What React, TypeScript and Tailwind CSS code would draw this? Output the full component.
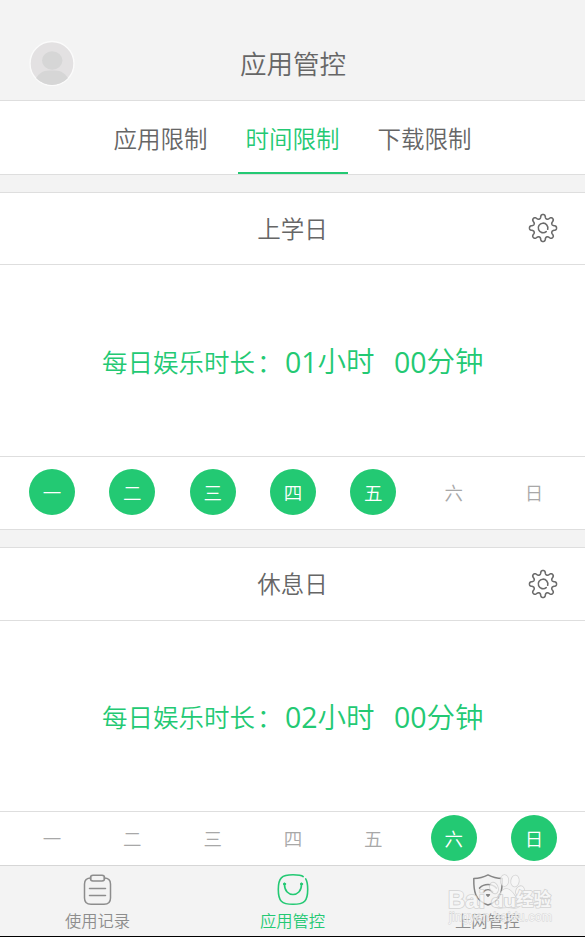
import React from 'react';

const GREEN = '#23c973';

const gearPath = (() => {
  const points: string[] = [];
  for (let i = 0; i < 240; i++) {
    const a = (i / 240) * Math.PI * 2;
    const r = 11.6 + (1.9 * Math.tanh(1.6 * Math.cos(8 * a))) / Math.tanh(1.6);
    points.push(`${(15 + r * Math.cos(a)).toFixed(2)} ${(15 + r * Math.sin(a)).toFixed(2)}`);
  }
  return `M${points.join('L')}Z`;
})();

function Gear() {
  return (
    <svg className="mb-px size-[30px]" viewBox="0 0 30 30" fill="none" stroke="#6b6b6b" strokeWidth="1.6" strokeLinejoin="round">
      <path d={gearPath} />
      <path d="M18.2 18.6A4.8 4.8 0 1 1 19.7 16.2" strokeLinecap="round" />
    </svg>
  );
}

function Avatar() {
  return (
    <svg className="ml-[29px] mt-10 size-[46px]" viewBox="0 0 46 46">
      <clipPath id="avatar">
        <circle cx="23" cy="23.5" r="21.5" />
      </clipPath>
      <circle cx="23" cy="23.5" r="22" fill="#e3e1e2" stroke="#fbfbfb" strokeWidth="1.4" />
      <g clipPath="url(#avatar)" fill="#d6d6d6">
        <ellipse cx="23.2" cy="20.5" rx="10.2" ry="9.3" />
        <path d="M5 42C9 33 14 30.5 20 30.5h6c6 0 11 2.500 15 11.500v6H5Z" />
      </g>
    </svg>
  );
}

function Day({ label, on }: { label: string; on: boolean }) {
  return (
    <div
      className={`flex size-[46px] shrink-0 items-center justify-center rounded-full text-[18.500px] leading-none ${
        on ? 'bg-[#23c973] text-white' : 'text-[#a8a8a8]'
      }`}
    >
      {label}
    </div>
  );
}

const days = ['一', '二', '三', '四', '五', '六', '日'];

function Duration({ value, unit }: { value: string; unit: string }) {
  return (
    <>
      <span className="pt-[3px] font-['Open_Sans',sans-serif] text-[28.500px] font-normal">{value}</span>
      <span className="text-[28.500px]">{unit}</span>
    </>
  );
}

function Section({ title, hours, active, last }: { title: string; hours: string; active: number[]; last?: boolean }) {
  return (
    <section className="shrink-0 bg-white">
      <div className={`grid ${last ? 'h-[74px]' : 'h-[73px]'} grid-cols-[1fr_auto_1fr] items-center border-y border-[#dedede]`}>
        <h2 className="col-start-2 text-[23.500px] leading-none text-[#666666]">{title}</h2>
        <div className="flex justify-end pr-[27px]">
          <Gear />
        </div>
      </div>
      <div className={`${last ? 'h-[190px]' : 'h-[191px]'} flex items-center whitespace-pre pl-[102px] leading-none text-[#23c973]`}>
        <span className="w-[183px] text-[25.500px]">
          每日娱乐时长<span className="ml-0.5">：</span>
        </span>
        <span className="flex w-[109px] items-center">
          <Duration value={hours} unit="小时" />
        </span>
        <span className="flex items-center">
          <Duration value="00" unit="分钟" />
        </span>
      </div>
      <div
        className={`flex justify-between border-t border-[#dedede] pl-[29px] pr-7 ${last ? 'h-[54px] pt-[3px]' : 'h-[74px] border-b pt-[12px]'}`}
      >
        {days.map((d, i) => (
          <Day key={d} label={d} on={active.includes(i)} />
        ))}
      </div>
    </section>
  );
}

function RecordIcon() {
  return (
    <svg className="h-8 w-8" viewBox="0 0 32 32" fill="none" stroke="#8d8d8d" strokeWidth="1.5" strokeLinecap="round">
      <path d="M9 4C5 4 2.500 6 2.500 10v14c0 4.500 2.500 6.300 6.500 6.300h13c4 0 6.500-1.800 6.500-6.300V10c0-4-2.500-6-6.500-6" />
      <rect x="8.500" y="1.300" width="14" height="5.700" rx="2.500" />
      <path d="M7.500 14.500h16M7.500 21.500h16" />
    </svg>
  );
}

function BagIcon() {
  return (
    <svg className="h-8 w-8" viewBox="0 0 32 32" fill="none" stroke={GREEN} strokeWidth="1.6" strokeLinecap="round">
      <path d="M26.200 2.600C24 .8 20.500.8 16 .8 4.500.8 1.300 4 1.300 15.500S4.500 30.300 16 30.300s14.700-3.300 14.700-14.800c0-4.500-.3-8-2-10.600" />
      <path d="M7.500 10.500c0 13.300 17 13.300 17 0" />
      <circle cx="7.500" cy="10" r="1.100" fill={GREEN} strokeWidth="1" />
      <circle cx="24.500" cy="10" r="1.100" fill={GREEN} strokeWidth="1" />
    </svg>
  );
}

function ShieldIcon() {
  return (
    <svg className="h-8 w-8" viewBox="0 0 32 34" fill="none" stroke="#858585" strokeWidth="1.6" strokeLinecap="round" strokeLinejoin="round">
      <path d="M16 1C11 3.800 6 4.800.9 4.800.7 18 1.800 28 16 33 30.200 28 31.300 18 31.100 4.800 26 4.800 21 3.800 16 1Z" />
      <path d="M7 15c5-5 13-5 18 0M11 19c3-3 7-3 10 0" />
      <path d="m14.500 22 1.500 1.500 1.500-1.500Z" fill="#858585" />
    </svg>
  );
}

function NavItem({ icon, label, active }: { icon: React.ReactNode; label: string; active?: boolean }) {
  return (
    <div className={`flex flex-1 flex-col items-center pt-2 text-[16.300px] ${active ? 'text-[#23c973]' : 'text-[#8d8d8d]'}`}>
      {icon}
      <span className="mt-[6px] leading-none">{label}</span>
    </div>
  );
}

function Watermark() {
  return (
    <svg
      className="absolute left-[445px] top-[5px] h-[62px] w-[120px]"
      viewBox="0 0 120 62"
      fill="#f8f8f8"
      opacity=".75"
      stroke="#c9c9c9"
      strokeWidth="1.6"
      paintOrder="stroke"
    >
      <ellipse cx="49" cy="17" rx="3.800" ry="5.500" transform="rotate(-20 49 17)" />
      <ellipse cx="59.500" cy="9.500" rx="3.800" ry="5.500" />
      <ellipse cx="70" cy="10" rx="3.800" ry="5.500" transform="rotate(8 70 10)" />
      <ellipse cx="75" cy="20" rx="3.800" ry="5" transform="rotate(25 75 20)" />
      <path d="M61 18c6 0 8 7 12 11 4 5 1 8-4 8-5-1-9-1-14 0-6 0-8-5-4-9 4-3 5-10 10-10Z" />
      <g fontFamily='"Liberation Sans", Arial, sans-serif' fontWeight="700">
        <text x="3" y="37" fontSize="23" textLength="37" lengthAdjust="spacingAndGlyphs">Bai</text>
        <text x="46" y="36" fontSize="17" textLength="25" lengthAdjust="spacingAndGlyphs">du</text>
      </g>
      <text x="71" y="35" fontSize="18" fontWeight="700" textLength="35" lengthAdjust="spacingAndGlyphs">经验</text>
      <text x="4" y="50" fontFamily='"Liberation Sans", Arial, sans-serif' fontSize="12" strokeWidth=".9" textLength="103">
        jingyan.baidu.com
      </text>
    </svg>
  );
}

export default function App() {
  return (
    <main className="flex h-[937px] w-[585px] flex-col overflow-hidden bg-[#f3f3f3] font-['Noto_Sans_CJK_SC',sans-serif] font-[350]">
      <header className="grid h-[101px] shrink-0 grid-cols-[1fr_auto_1fr] border-b border-[#dedede]">
        <Avatar />
        <h1 className="ml-px mt-[50px] text-[26.500px] leading-none text-[#666666]">应用管控</h1>
      </header>
      <nav className="flex h-[74px] shrink-0 justify-center gap-[22px] border-b border-[#dedede] bg-white text-[23.500px] leading-none text-[#666666]">
        <div className="w-[110px] pt-[26px] text-center">应用限制</div>
        <div className="w-[110px] border-b-2 border-[#23c973] pt-[26px] text-center text-[#23c973]">时间限制</div>
        <div className="w-[110px] pt-[26px] text-center">下载限制</div>
      </nav>
      <div className="flex shrink-0 flex-col pt-[17px]">
        <Section title="上学日" hours="01" active={[0, 1, 2, 3, 4]} />
        <div className="h-[17px]" />
        <Section title="休息日" hours="02" active={[5, 6]} last />
      </div>
      <footer className="relative flex h-[72px] shrink-0 border-b-[1.500px] border-t border-b-black border-t-[#d6d6d6] bg-[#f3f3f3]">
        <NavItem icon={<RecordIcon />} label="使用记录" />
        <NavItem icon={<BagIcon />} label="应用管控" active />
        <NavItem icon={<ShieldIcon />} label="上网管控" />
        <Watermark />
      </footer>
    </main>
  );
}
